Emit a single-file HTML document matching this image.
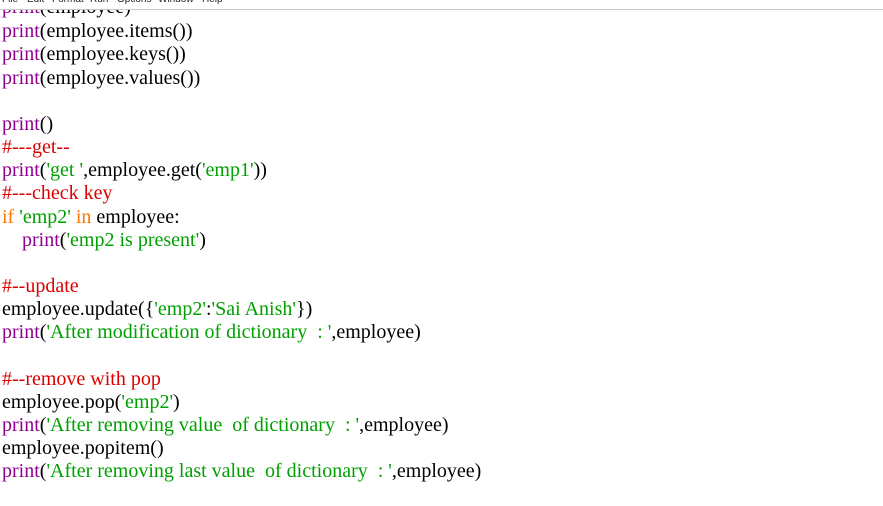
<!DOCTYPE html>
<html><head><style>
html,body{margin:0;padding:0;background:#fff;width:883px;height:506px;overflow:hidden;position:relative}
.menu{position:absolute;left:0;top:0;width:883px;height:9px;background:#fff;border-bottom:1px solid #c8c8c8;overflow:hidden}
.menu span{position:absolute;top:-6px;font:10px "Liberation Sans",sans-serif;color:#222}
.l{position:absolute;left:2px;font:20px "Liberation Serif",serif;white-space:pre;color:#000;line-height:23px}
.p{color:#900090}.s{color:#00a000}.c{color:#dd0000}.k{color:#ff7700}
</style></head><body>
<div class="l" style="top:-4px"><span class="p">print</span>(employee)</div>
<div class="menu"><span style="left:2px">File</span><span style="left:27px">Edit</span><span style="left:52px">Format</span><span style="left:90px">Run</span><span style="left:117px">Options</span><span style="left:158px">Window</span><span style="left:202px">Help</span></div>
<div class="l" style="top:20px"><span class="p">print</span>(employee.items())</div>
<div class="l" style="top:43px"><span class="p">print</span>(employee.keys())</div>
<div class="l" style="top:67px"><span class="p">print</span>(employee.values())</div>
<div class="l" style="top:113px"><span class="p">print</span>()</div>
<div class="l" style="top:136px"><span class="c">#---get--</span></div>
<div class="l" style="top:159px"><span class="p">print</span>(<span class="s">'get '</span>,employee.get(<span class="s">'emp1'</span>))</div>
<div class="l" style="top:182px"><span class="c">#---check key</span></div>
<div class="l" style="top:206px"><span class="k">if</span> <span class="s">'emp2'</span> <span class="k">in</span> employee:</div>
<div class="l" style="top:229px">    <span class="p">print</span>(<span class="s">'emp2 is present'</span>)</div>
<div class="l" style="top:275px"><span class="c">#--update</span></div>
<div class="l" style="top:298px">employee.update({<span class="s">'emp2'</span>:<span class="s">'Sai Anish'</span>})</div>
<div class="l" style="top:321px"><span class="p">print</span>(<span class="s">'After modification of dictionary  : '</span>,employee)</div>
<div class="l" style="top:368px"><span class="c">#--remove with pop</span></div>
<div class="l" style="top:391px">employee.pop(<span class="s">'emp2'</span>)</div>
<div class="l" style="top:414px"><span class="p">print</span>(<span class="s">'After removing value  of dictionary  : '</span>,employee)</div>
<div class="l" style="top:437px">employee.popitem()</div>
<div class="l" style="top:460px"><span class="p">print</span>(<span class="s">'After removing last value  of dictionary  : '</span>,employee)</div>
</body></html>
